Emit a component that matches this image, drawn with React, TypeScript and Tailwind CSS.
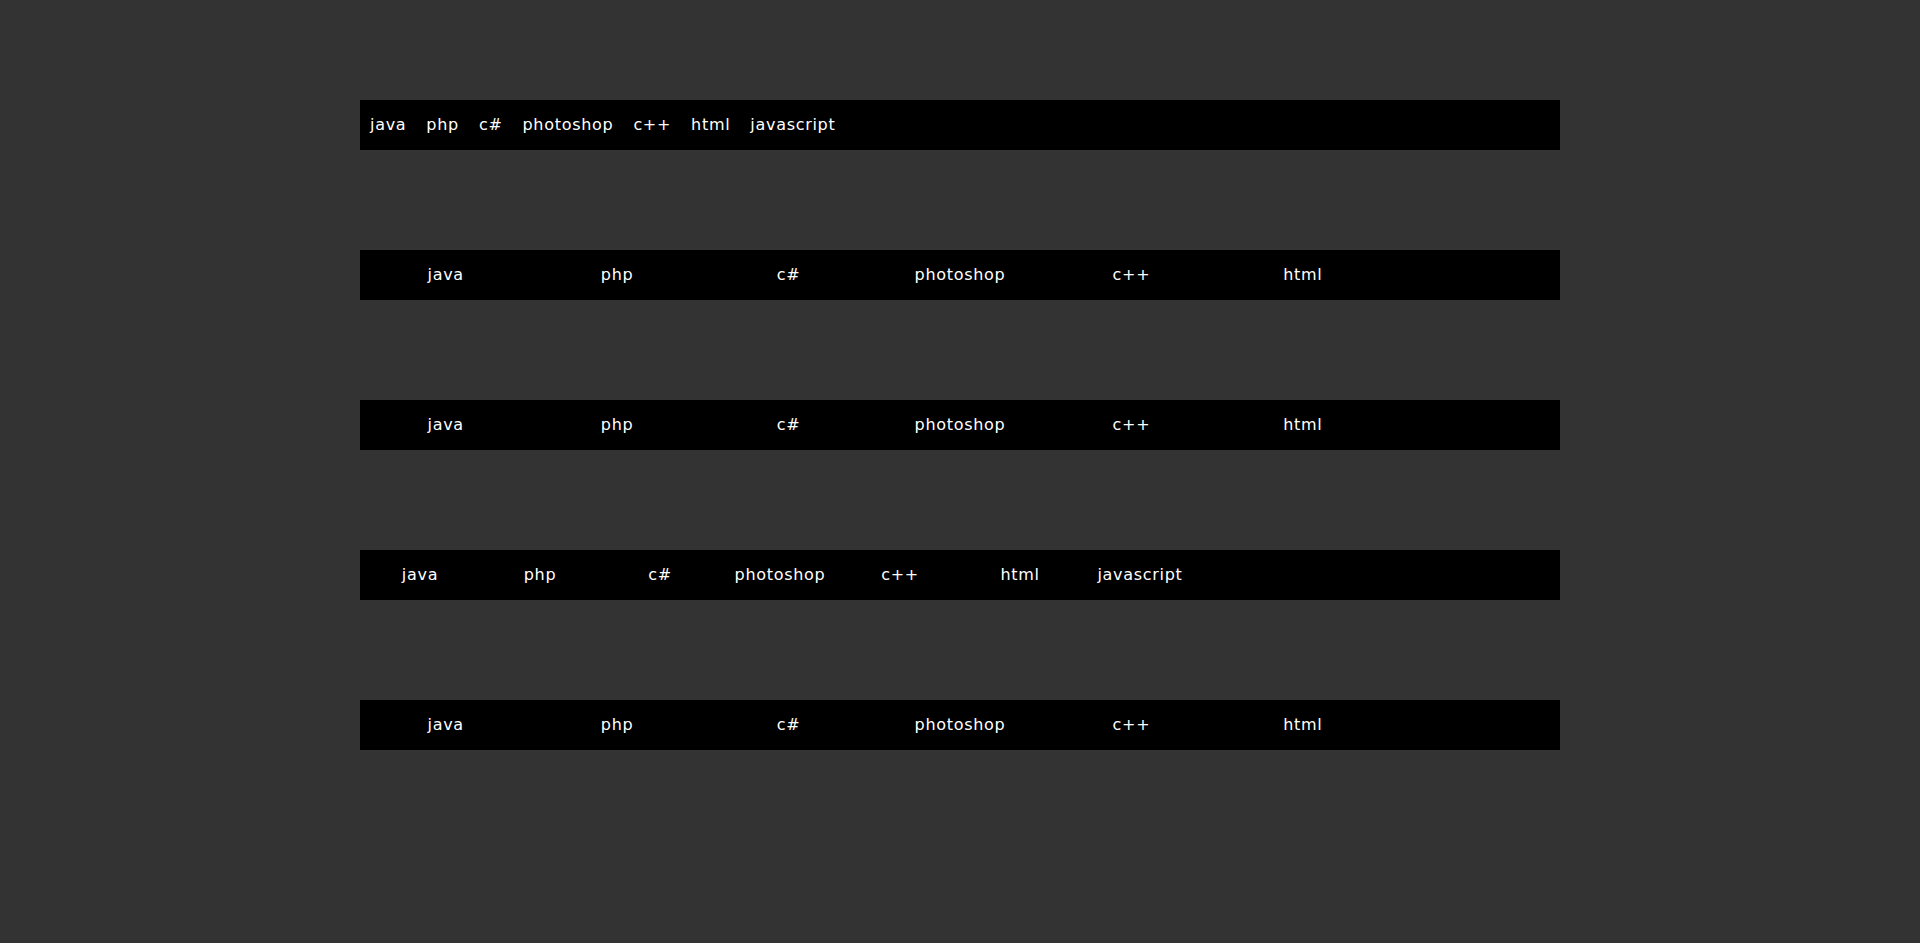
import React from "react";

const all = ["java", "php", "c#", "photoshop", "c++", "html", "javascript"];

const font = "font-['DejaVu_Sans','Verdana',sans-serif] text-[16px] tracking-[0.7px] text-white leading-[50px]";

function BarNatural() {
  return (
    <ul className={`flex h-[50px] bg-black ${font}`}>
      {all.map((t) => (
        <li key={t} className="px-[10px]">{t}</li>
      ))}
    </ul>
  );
}

function BarEqual() {
  return (
    <ul className={`flex h-[50px] bg-black ${font}`}>
      {all.map((t, i) => (
        <li key={t} className="flex-1 text-center">{i < 6 ? t : ""}</li>
      ))}
    </ul>
  );
}

function BarFixed() {
  return (
    <ul className={`flex h-[50px] bg-black ${font}`}>
      {all.map((t) => (
        <li key={t} className="w-[120px] text-center">{t}</li>
      ))}
    </ul>
  );
}

export default function App() {
  return (
    <div className="min-h-screen bg-[#333333]">
      <div className="mx-auto flex w-[1200px] flex-col gap-[100px] pt-[100px]">
        <BarNatural />
        <BarEqual />
        <BarEqual />
        <BarFixed />
        <BarEqual />
      </div>
    </div>
  );
}
